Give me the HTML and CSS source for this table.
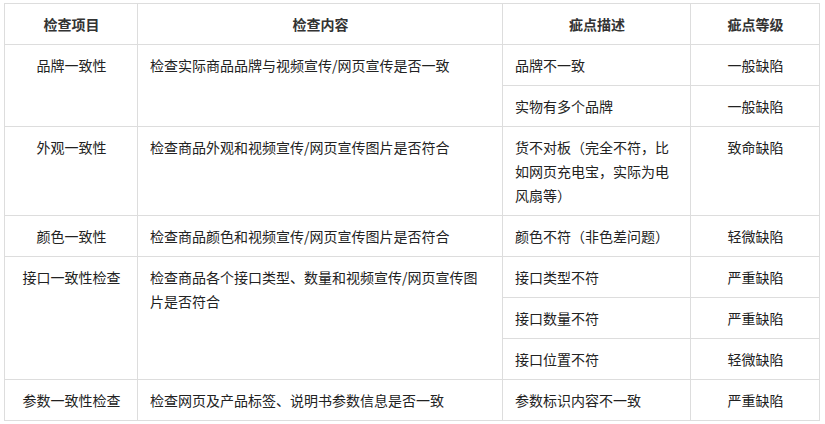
FILE: index.html
```html
<!DOCTYPE html>
<html lang="zh-CN">
<head>
<meta charset="utf-8">
<title>检查项目</title>
<link rel="stylesheet" href="styles.css">
</head>
<body>
<table class="spec">
  <colgroup>
    <col class="c1"><col class="c2"><col class="c3"><col class="c4">
  </colgroup>
  <thead>
    <tr>
      <th>检查项目</th>
      <th>检查内容</th>
      <th>疵点描述</th>
      <th>疵点等级</th>
    </tr>
  </thead>
  <tbody>
    <tr>
      <td class="center" rowspan="2">品牌一致性</td>
      <td rowspan="2">检查实际商品品牌与视频宣传/网页宣传是否一致</td>
      <td>品牌不一致</td>
      <td class="center">一般缺陷</td>
    </tr>
    <tr>
      <td>实物有多个品牌</td>
      <td class="center">一般缺陷</td>
    </tr>
    <tr>
      <td class="center">外观一致性</td>
      <td>检查商品外观和视频宣传/网页宣传图片是否符合</td>
      <td>货不对板（完全不符，比如网页充电宝，实际为电风扇等）</td>
      <td class="center">致命缺陷</td>
    </tr>
    <tr>
      <td class="center">颜色一致性</td>
      <td>检查商品颜色和视频宣传/网页宣传图片是否符合</td>
      <td>颜色不符（非色差问题）</td>
      <td class="center">轻微缺陷</td>
    </tr>
    <tr>
      <td class="center" rowspan="3">接口一致性检查</td>
      <td rowspan="3">检查商品各个接口类型、数量和视频宣传/网页宣传图片是否符合</td>
      <td>接口类型不符</td>
      <td class="center">严重缺陷</td>
    </tr>
    <tr>
      <td>接口数量不符</td>
      <td class="center">严重缺陷</td>
    </tr>
    <tr>
      <td>接口位置不符</td>
      <td class="center">轻微缺陷</td>
    </tr>
    <tr>
      <td class="center">参数一致性检查</td>
      <td>检查网页及产品标签、说明书参数信息是否一致</td>
      <td>参数标识内容不一致</td>
      <td class="center">严重缺陷</td>
    </tr>
  </tbody>
</table>
</body>
</html>
```
FILE: styles.css
```css
html, body {
  margin: 0;
  padding: 0;
  background: #ffffff;
}
body {
  padding: 3px 0 0 4px;
  font-family: "Noto Sans CJK SC", "Liberation Sans", sans-serif;
  font-size: 14px;
  line-height: 24px;
  color: #222222;
}
.spec {
  border-collapse: collapse;
  table-layout: fixed;
  width: 815px;
}
.c1 { width: 133px; }
.c2 { width: 365px; }
.c3 { width: 188px; }
.c4 { width: 129px; }
.spec th,
.spec td {
  border: 1px solid #dddddd;
  padding: 8px 11px 8px 12px;
  vertical-align: top;
  text-align: left;
  word-break: break-all;
}
.spec th {
  text-align: center;
  font-weight: bold;
  color: #333333;
}
.spec td.center {
  text-align: center;
}
```
